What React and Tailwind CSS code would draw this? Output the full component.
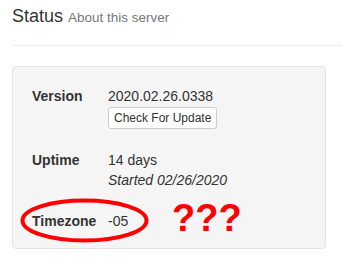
import React from 'react';

const Row = ({ label, children, className = '' }) => (
  <div className={`flex ${className}`}>
    <div className="w-[76px] shrink-0 font-bold text-[14px] leading-[20px]">{label}</div>
    <div className="text-[14px] leading-[20px]">{children}</div>
  </div>
);

const App = () => {
  return (
    <div className="w-[342px] h-[276px] bg-white overflow-hidden text-[#333]" style={{ fontFamily: '"Liberation Sans", Arial, sans-serif' }}>
      <div className="pl-3 pt-[4px]">
        <h1 className="text-[18px] leading-[24px] font-normal">
          Status <span className="text-[13.5px] text-[#777]">About this server</span>
        </h1>
        <div className="mt-[15px] border-t border-[#eee]" />
      </div>

      <div className="ml-3 mt-[20px] w-[314px] bg-[#f5f5f5] border border-[#e3e3e3] rounded-[4px] pl-[19px] pt-[19px] pb-[17px] relative">
        <Row label="Version">
          <div>2020.02.26.0338</div>
          <button className="mt-px bg-white border border-[#ccc] rounded-[3px] px-[5px] py-px text-[12px] leading-[18px] text-[#333]">
            Check For Update
          </button>
        </Row>

        <Row label="Uptime" className="mt-[21px]">
          <div>14 days</div>
          <div className="italic">Started 02/26/2020</div>
        </Row>

        <Row label="Timezone" className="mt-[21px]">
          <div>-05</div>
        </Row>

        {/* annotation overlay */}
        <svg className="absolute left-[7px] top-[131px]" width="129" height="45" viewBox="0 0 129 45">
          <ellipse cx="64.5" cy="22.5" rx="62" ry="20" fill="none" stroke="#ff0000" strokeWidth="4" />
        </svg>
        <div className="absolute left-[159px] top-[129px] text-[38px] leading-[44px] font-bold text-[#ff0000]">???</div>
      </div>
    </div>
  );
};

export default App;
